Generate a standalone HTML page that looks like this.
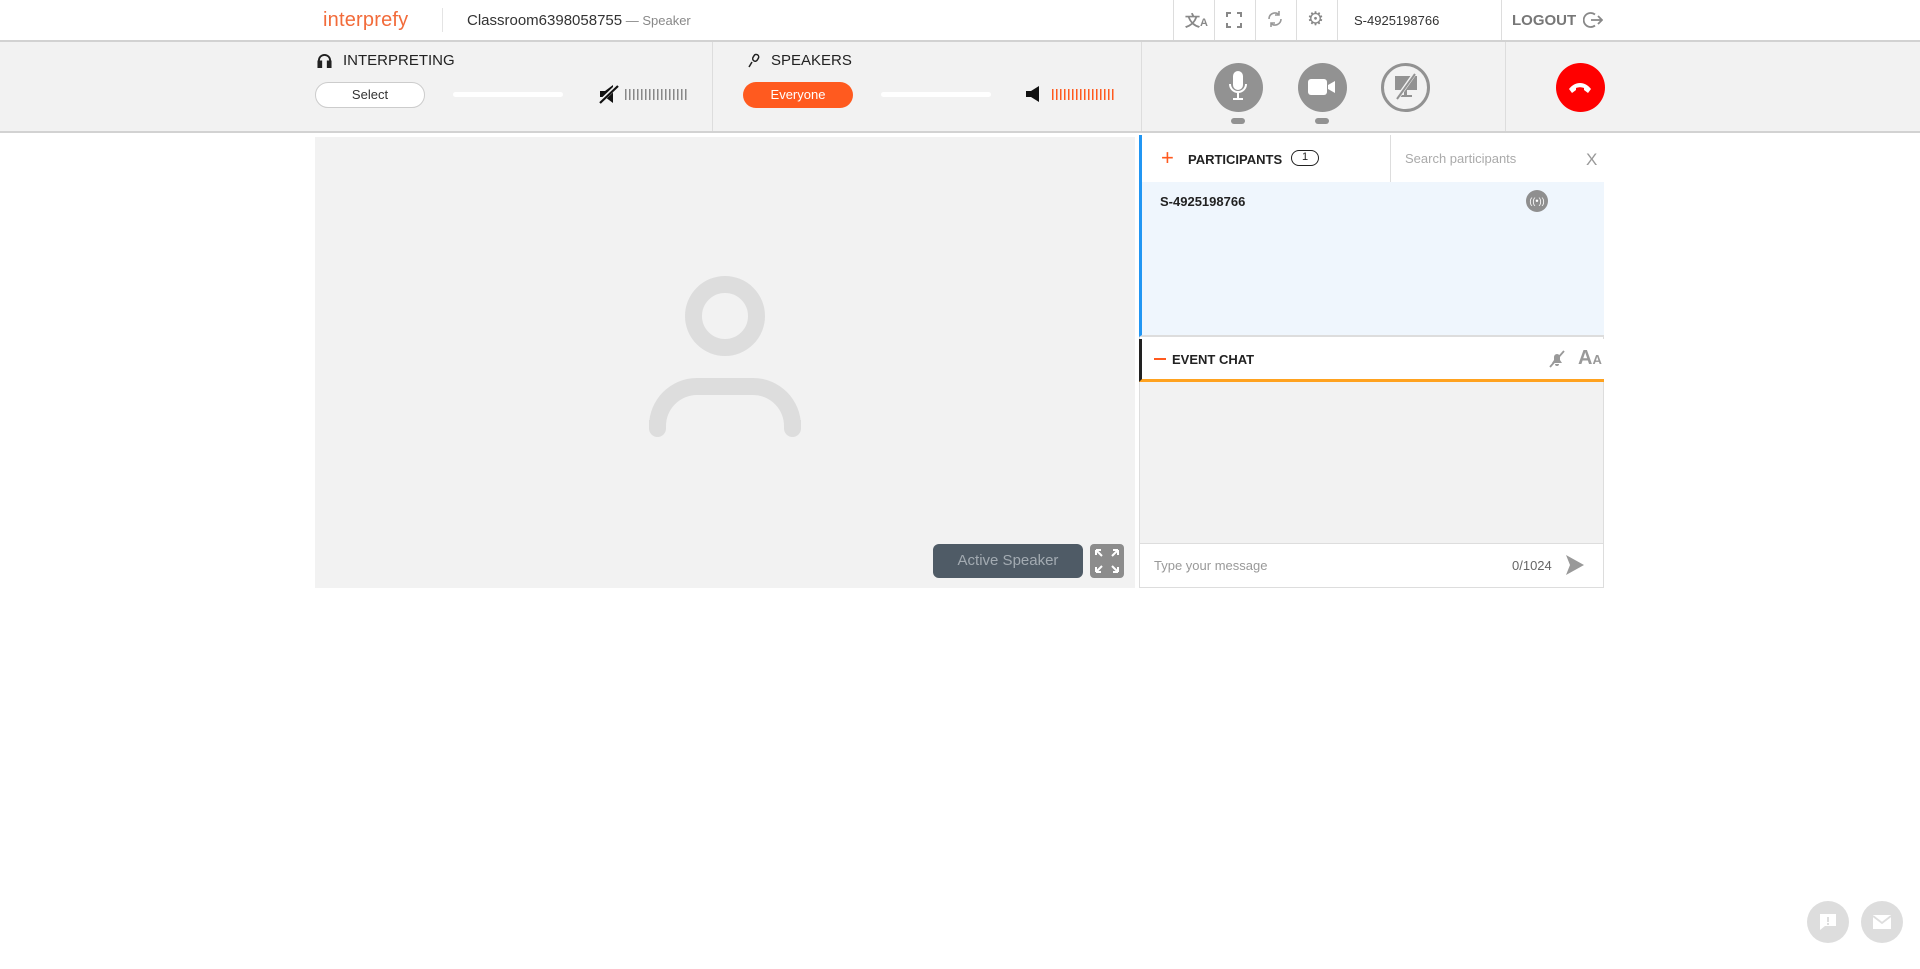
<!DOCTYPE html>
<html><head><meta charset="utf-8"><style>
*{box-sizing:border-box;margin:0;padding:0}
body{width:1920px;height:969px;background:#fff;font-family:"Liberation Sans",sans-serif;position:relative;overflow:hidden;color:#333}
.a{position:absolute}
.vs{position:absolute;width:1px;background:#ddd}
</style></head><body>
<!-- top bar -->
<div class="a" style="left:323px;top:9px;font-size:20px;color:#f26b3a;letter-spacing:0.2px">interprefy</div>
<div class="vs" style="left:442px;top:8px;height:24px;background:#e4e4e4"></div>
<div class="a" style="left:467px;top:12px;font-size:15px;color:#333">Classroom6398058755<span style="color:#888;font-size:13px"> — Speaker</span></div>
<div class="vs" style="left:1173px;top:0;height:40px"></div>
<div class="vs" style="left:1214px;top:0;height:40px"></div>
<div class="vs" style="left:1255px;top:0;height:40px"></div>
<div class="vs" style="left:1296px;top:0;height:40px"></div>
<div class="vs" style="left:1337px;top:0;height:40px"></div>
<div class="vs" style="left:1501px;top:0;height:40px"></div>
<div class="a" style="left:1185px;top:10px;font-size:15px;color:#888;font-weight:bold">文<span style="font-size:11px">A</span></div>
<svg class="a" style="left:1226px;top:12px" width="16" height="16" viewBox="0 0 16 16" fill="none" stroke="#888" stroke-width="2"><path d="M1 5V1h4M11 1h4v4M15 11v4h-4M5 15H1v-4"/></svg>
<svg class="a" style="left:1266px;top:10px" width="18" height="18" viewBox="0 0 18 18" fill="none" stroke="#999" stroke-width="1.6"><path d="M3 9a6 6 0 0 1 10-4.5M15 9a6 6 0 0 1-10 4.5"/><path d="M13 1v4h-4M5 17v-4h4"/></svg>
<div class="a" style="left:1307px;top:8px;font-size:19px;color:#888">⚙</div>
<div class="a" style="left:1354px;top:13px;font-size:13px;color:#333">S-4925198766</div>
<div class="a" style="left:1512px;top:12px;font-size:15px;color:#777;font-weight:bold">LOGOUT</div>
<svg class="a" style="left:1583px;top:10px" width="20" height="20" viewBox="0 0 20 20" fill="none" stroke="#888" stroke-width="1.8"><path d="M12 4.5A7 7 0 1 0 12 15.5"/><path d="M8 10h11M15 6l4 4-4 4"/></svg>
<!-- control bar -->
<div class="a" style="left:0;top:40px;width:1920px;height:93px;background:#f2f2f2;border-top:2px solid #d2d2d2;border-bottom:2px solid #d2d2d2"></div>
<div class="vs" style="left:712px;top:42px;height:89px"></div>
<div class="vs" style="left:1141px;top:42px;height:89px"></div>
<div class="vs" style="left:1505px;top:42px;height:89px"></div>
<svg class="a" style="left:317px;top:53px" width="15" height="15" viewBox="0 0 16 16" fill="none" stroke="#222" stroke-width="2"><path d="M2 12V8a6 6 0 0 1 12 0v4"/><rect x="1.5" y="9" width="3" height="6" fill="#222"/><rect x="11.5" y="9" width="3" height="6" fill="#222"/></svg>
<div class="a" style="left:343px;top:52px;font-size:15px;color:#222">INTERPRETING</div>
<div class="a" style="left:315px;top:82px;width:110px;height:26px;background:#fff;border:1px solid #ccc;border-radius:13px;font-size:13px;text-align:center;line-height:24px;color:#333">Select</div>
<div class="a" style="left:453px;top:92px;width:110px;height:5px;background:#fff;border-radius:3px"></div>
<svg class="a" style="left:598px;top:84px" width="22" height="20" viewBox="0 0 22 20"><path d="M2 7h5l8-6v18l-8-6H2z" fill="#111"/><path d="M1 19L20 1" stroke="#f2f2f2" stroke-width="4"/><path d="M2 19L20 2" stroke="#111" stroke-width="2.2"/></svg>
<div class="a" style="left:625px;top:89px;width:63px;height:11px;background:repeating-linear-gradient(90deg,#888 0 1.5px,transparent 1.5px 4px)"></div>
<svg class="a" style="left:747px;top:53px" width="14" height="15" viewBox="0 0 14 15" fill="none" stroke="#222" stroke-width="1.5"><rect x="6" y="1" width="5" height="7" rx="2.5" transform="rotate(30 8 5)"/><path d="M5 9l-3 5"/></svg>
<div class="a" style="left:771px;top:52px;font-size:15px;color:#222">SPEAKERS</div>
<div class="a" style="left:743px;top:82px;width:110px;height:26px;background:#ff5a1f;border-radius:13px;font-size:13px;text-align:center;line-height:26px;color:#fff">Everyone</div>
<div class="a" style="left:881px;top:92px;width:110px;height:5px;background:#fff;border-radius:3px"></div>
<svg class="a" style="left:1026px;top:86px" width="14" height="16" viewBox="0 0 14 16"><path d="M0 5h5l8-5v16l-8-5H0z" fill="#111"/></svg>
<div class="a" style="left:1052px;top:89px;width:63px;height:11px;background:repeating-linear-gradient(90deg,#ff5a1f 0 1.5px,transparent 1.5px 4px)"></div>
<!-- media buttons -->
<div class="a" style="left:1214px;top:63px;width:49px;height:49px;border-radius:50%;background:#929292"></div>
<svg class="a" style="left:1228px;top:71px" width="20" height="32" viewBox="0 0 20 32" fill="none" stroke="#fff" stroke-width="2"><rect x="6" y="1" width="8" height="17" rx="4" fill="#fff"/><path d="M2 13a8 8 0 0 0 16 0M10 21v6M5 28h10"/></svg>
<div class="a" style="left:1231px;top:118px;width:14px;height:6px;border-radius:3px;background:#929292"></div>
<div class="a" style="left:1298px;top:63px;width:49px;height:49px;border-radius:50%;background:#929292"></div>
<svg class="a" style="left:1307px;top:77px" width="30" height="20" viewBox="0 0 30 20"><rect x="1" y="2" width="19" height="16" rx="3" fill="#fff"/><path d="M21 8l7-4v12l-7-4z" fill="#fff"/></svg>
<div class="a" style="left:1315px;top:118px;width:14px;height:6px;border-radius:3px;background:#929292"></div>
<div class="a" style="left:1381px;top:63px;width:49px;height:49px;border-radius:50%;border:3px solid #929292"></div>
<svg class="a" style="left:1393px;top:73px" width="26" height="28" viewBox="0 0 26 28"><rect x="2" y="3" width="22" height="14" fill="#929292"/><rect x="11" y="17" width="3" height="5" fill="#929292"/><rect x="6" y="22" width="13" height="2" fill="#929292"/><path d="M22 0L3 27" stroke="#f2f2f2" stroke-width="4"/><path d="M22 1L4 26" stroke="#929292" stroke-width="2"/></svg>
<div class="a" style="left:1556px;top:63px;width:49px;height:49px;border-radius:50%;background:#ff0000"></div>
<svg class="a" style="left:1567px;top:80px" width="26" height="14" viewBox="0 0 26 14"><path d="M2 9c6-8 16-8 22 0l-3 4-4-3 0-2c-3-1-5-1-8 0l0 2-4 3z" fill="#fff"/></svg>
<!-- video -->
<div class="a" style="left:315px;top:137px;width:820px;height:451px;background:#f2f2f2"></div>
<div class="a" style="left:685px;top:276px;width:80px;height:80px;border-radius:50%;border:17px solid #ddd"></div>
<div class="a" style="left:649px;top:378px;width:152px;height:51px;border-radius:48px 48px 0 0;border:17px solid #ddd;border-bottom:none"></div>
<div class="a" style="left:649px;top:420px;width:17px;height:17px;border-radius:0 0 9px 9px;background:#ddd"></div>
<div class="a" style="left:784px;top:420px;width:17px;height:17px;border-radius:0 0 9px 9px;background:#ddd"></div>
<div class="a" style="left:933px;top:544px;width:150px;height:34px;border-radius:6px;background:#4f5b66;color:#a3abb2;font-size:15px;text-align:center;line-height:34px">Active Speaker</div>
<div class="a" style="left:1090px;top:544px;width:34px;height:34px;border-radius:4px;background:#8c8c8c"></div>
<svg class="a" style="left:1094px;top:548px" width="26" height="26" viewBox="0 0 26 26" fill="none" stroke="#fff" stroke-width="2"><path d="M2 2l6 6M2 2v5M2 2h5M24 2l-6 6M24 2v5M24 2h-5M2 24l6-6M2 24v-5M2 24h5M24 24l-6-6M24 24v-5M24 24h-5"/></svg>
<!-- right panel -->
<div class="a" style="left:1139px;top:135px;width:465px;height:453px;border:1px solid #ddd"></div>
<div class="a" style="left:1139px;top:135px;width:465px;height:47px;background:#fff;border-left:3px solid #2196f3"></div>
<div class="a" style="left:1161px;top:145px;font-size:22px;color:#ff5a1f;line-height:26px">+</div>
<div class="a" style="left:1188px;top:152px;font-size:13px;font-weight:bold;color:#222">PARTICIPANTS</div>
<div class="a" style="left:1291px;top:150px;width:28px;height:16px;border:1.5px solid #222;border-radius:8px;font-size:11px;text-align:center;line-height:13px;color:#222">1</div>
<div class="vs" style="left:1390px;top:135px;height:47px;background:#ddd"></div>
<div class="a" style="left:1405px;top:151px;font-size:13px;color:#aaa">Search participants</div>
<div class="a" style="left:1586px;top:150px;font-size:17px;color:#999">X</div>
<div class="a" style="left:1139px;top:182px;width:465px;height:155px;background:#eff6fd;border-left:3px solid #2196f3;border-bottom:2px solid #ddd"></div>
<div class="a" style="left:1160px;top:194px;font-size:13px;font-weight:bold;color:#222">S-4925198766</div>
<div class="a" style="left:1526px;top:190px;width:22px;height:22px;border-radius:50%;background:#8f8f8f;color:#fff;font-size:9px;text-align:center;line-height:22px">((•))</div>
<div class="a" style="left:1139px;top:339px;width:465px;height:43px;background:#fff;border-left:3px solid #222;border-bottom:3px solid #ffa21f"></div>
<div class="a" style="left:1154px;top:358px;width:12px;height:2px;background:#ff5a1f"></div>
<div class="a" style="left:1172px;top:352px;font-size:13px;font-weight:bold;color:#222">EVENT CHAT</div>
<svg class="a" style="left:1549px;top:350px" width="16" height="18" viewBox="0 0 16 18" fill="#999"><path d="M3 13h10l-2-3V7a3 3 0 0 0-6 0v3zM6 14h4a2 2 0 0 1-4 0z"/><path d="M1 17L15 1" stroke="#999" stroke-width="1.8"/></svg>
<div class="a" style="left:1578px;top:347px;font-size:20px;color:#999;font-weight:bold">A<span style="font-size:13px">A</span></div>
<div class="a" style="left:1140px;top:382px;width:463px;height:162px;background:#f2f2f2;border-bottom:1px solid #ddd"></div>
<div class="a" style="left:1154px;top:558px;font-size:13px;color:#999">Type your message</div>
<div class="a" style="left:1512px;top:558px;font-size:13px;color:#666">0/1024</div>
<svg class="a" style="left:1566px;top:555px" width="18" height="20" viewBox="0 0 18 20"><path d="M0 0l18 10L0 20l4-10z" fill="#999"/></svg>
<!-- floating -->
<div class="a" style="left:1807px;top:901px;width:42px;height:42px;border-radius:50%;background:#ddd"></div>
<svg class="a" style="left:1818px;top:912px" width="20" height="20" viewBox="0 0 20 20"><path d="M2 2h16v12H7l-5 4z" fill="#fff"/><rect x="9" y="5" width="2" height="5" fill="#ddd"/><rect x="9" y="11" width="2" height="2" fill="#ddd"/></svg>
<div class="a" style="left:1861px;top:901px;width:42px;height:42px;border-radius:50%;background:#ddd"></div>
<svg class="a" style="left:1872px;top:914px" width="20" height="16" viewBox="0 0 20 16"><rect x="1" y="1" width="18" height="14" fill="#fff"/><path d="M1 2l9 7 9-7" fill="none" stroke="#ddd" stroke-width="1.8"/></svg>
</body></html>
